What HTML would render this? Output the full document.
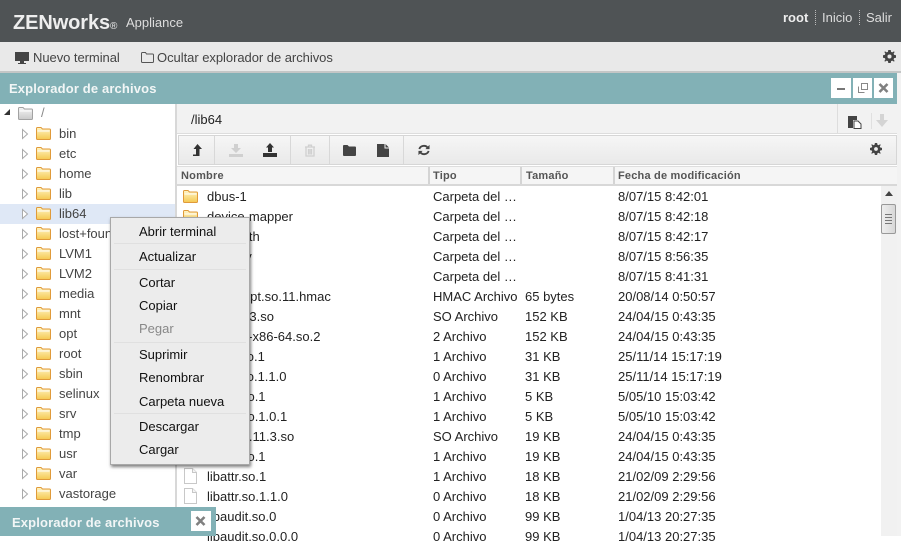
<!DOCTYPE html>
<html><head><meta charset="utf-8"><style>
*{box-sizing:border-box}
html,body{margin:0;padding:0;width:901px;height:536px;overflow:hidden;background:#fff;font-family:"Liberation Sans",Arial,sans-serif;font-size:13px;color:#222}
.a{position:absolute}
.t{position:absolute;white-space:nowrap;line-height:16px}
.tr{position:absolute;left:0;width:175px;height:20px;color:#444}
.tr span{position:absolute;left:59px;top:2px;line-height:16px}
.tr svg{position:absolute}
.fr{position:absolute;left:177px;width:704px;height:20px;color:#222}
.fr span{position:absolute;top:3px;line-height:16px;white-space:nowrap}
.fr svg{position:absolute;left:6px;top:4px}
.n{left:30px}.k{left:256px}.s{left:348px}.d{left:441px}
.m{position:absolute;left:28px;line-height:16px;color:#111}
.sep{position:absolute;left:3px;right:3px;height:1px;background:#e0e0e0}
.th{position:absolute;top:167px;height:20px;line-height:18px;font-weight:bold;font-size:11px;color:#555;letter-spacing:.2px}
.wb{position:absolute;top:78px;height:20px;background:#fff}
.vs{position:absolute;top:136px;width:1px;height:28px;background:#d8d8d8}
</style></head><body>
<svg width="0" height="0" style="position:absolute"><defs>
<linearGradient id="fg" x1="0" y1="0" x2="0" y2="1"><stop offset="0" stop-color="#fff6c8"/><stop offset="1" stop-color="#f5c850"/></linearGradient>
<symbol id="fo" viewBox="0 0 15 13"><path d="M.5 2.500V1.500Q.5.5 1.500.5H5L6.500 2H13.500Q14.500 2 14.500 3V11.500Q14.500 12.500 13.500 12.500H1.500Q.5 12.500 .5 11.500Z" fill="url(#fg)" stroke="#e09a3a"/><path d="M1.500 4H13.500" stroke="#fff"/></symbol>
<symbol id="fi" viewBox="0 0 15 16"><path d="M1.500.5H9.500L13.500 4.500V15.500H1.500Z" fill="#fff" stroke="#c8c8c8"/><path d="M9.500.5V4.500H13.500" fill="#f4f4f4" stroke="#c8c8c8"/></symbol>
<symbol id="ar" viewBox="0 0 8 12"><path d="M1.500 1.500L6.500 6L1.500 10.500Z" fill="#fff" stroke="#aaa"/></symbol>
<symbol id="ge" viewBox="0 0 14 14"><path fill="#444" fill-rule="evenodd" d="M5.700 0H8.300L8.700 2L10 2.600L11.800 1.500L12.500 2.200L11.400 4L12 5.300L14 5.700V8.300L12 8.700L11.400 10L12.500 11.800L11.800 12.500L10 11.400L8.700 12L8.300 14H5.700L5.300 12L4 11.400L2.200 12.500L1.500 11.800L2.600 10L2 8.700L0 8.300V5.700L2 5.300L2.600 4L1.500 2.200L2.200 1.500L4 2.600L5.300 2ZM7 4.800A2.200 2.200 0 1 0 7 9.200A2.200 2.200 0 1 0 7 4.800Z"/></symbol>
</defs></svg>

<!-- header -->
<div class="a" style="left:0;top:0;width:901px;height:42px;background:#4f5355"></div>
<div class="t" style="left:13px;top:11px;font-size:20px;line-height:24px;font-weight:bold;color:#eee;letter-spacing:-.1px">ZENworks<span style="font-size:10px;font-weight:normal;letter-spacing:0">®</span></div>
<div class="t" style="left:126px;top:15px;font-size:13px;color:#ddd">Appliance</div>
<div class="t" style="left:783px;top:10px;font-size:13px;font-weight:bold;color:#eee">root</div>
<div class="a" style="left:815px;top:10px;height:15px;border-left:1px dotted #bbb"></div>
<div class="t" style="left:822px;top:10px;font-size:13px;color:#ddd">Inicio</div>
<div class="a" style="left:859px;top:10px;height:15px;border-left:1px dotted #bbb"></div>
<div class="t" style="left:866px;top:10px;font-size:13px;color:#ddd">Salir</div>

<!-- toolbar -->
<div class="a" style="left:0;top:42px;width:901px;height:31px;background:#e9e9e9;border-bottom:2px solid #c4c6c6"></div>
<svg class="a" style="left:15px;top:52px" width="14" height="13" viewBox="0 0 14 13"><path fill="#444" fill-rule="evenodd" d="M0 0H14V9H9V11H11V12H3V11H5V9H0Z"/></svg>
<div class="t" style="left:33px;top:50px;font-size:13px;color:#444;letter-spacing:-.05px">Nuevo terminal</div>
<svg class="a" style="left:141px;top:52px" width="13" height="11" viewBox="0 0 13 11"><path fill="none" stroke="#555" d="M.5 1.500Q.5.5 1.500.5H4.500L5.500 2H11.500Q12.500 2 12.500 3V9.500Q12.500 10.500 11.500 10.500H1.500Q.5 10.500 .5 9.500Z"/></svg>
<div class="t" style="left:157px;top:50px;font-size:13px;color:#444;letter-spacing:-.04px">Ocultar explorador de archivos</div>
<svg class="a" style="left:883px;top:50px" width="13" height="13"><use href="#ge"/></svg>

<!-- right strip -->
<div class="a" style="left:897px;top:73px;width:4px;height:463px;background:#f2f2f2"></div>

<!-- teal title -->
<div class="a" style="left:0;top:73px;width:897px;height:31px;background:#82b1b6"></div>
<div class="t" style="left:9px;top:81px;font-size:13px;font-weight:bold;color:#f2f6f6;letter-spacing:.14px">Explorador de archivos</div>
<div class="wb" style="left:831px;width:20px"><div class="a" style="left:6px;top:10px;width:8px;height:2px;background:#777"></div></div>
<div class="wb" style="left:853px;width:19px"><svg class="a" style="left:5px;top:5px" width="10" height="10"><path d="M3.500.5H9.500V6.500H3.500ZM.5 3.500V9.500H6.500" fill="none" stroke="#888"/></svg></div>
<div class="wb" style="left:874px;width:19px"><svg class="a" style="left:4px;top:5px" width="11" height="10"><path d="M1.500 1L9.500 9M9.500 1L1.500 9" stroke="#808080" stroke-width="2.600"/></svg></div>

<!-- tree -->
<div class="a" style="left:175px;top:104px;width:2px;height:432px;background:#d8d8d8"></div>
<svg class="a" style="left:3px;top:108px" width="8" height="8"><path d="M7 1V7H1Z" fill="#333"/></svg>
<svg class="a" style="left:18px;top:107px" width="15" height="13"><use href="#fo" style="filter:grayscale(1)"/></svg>
<div class="t" style="left:41px;top:105px;color:#888">/</div>
<div class="a" style="left:0;top:204px;width:175px;height:20px;background:#dfe8f6"></div>

<div class="tr" style="top:124px"><svg style="left:21px;top:4px" width="8" height="12"><use href="#ar"/></svg><svg style="left:36px;top:3px" width="15" height="13"><use href="#fo"/></svg><span>bin</span></div>
<div class="tr" style="top:144px"><svg style="left:21px;top:4px" width="8" height="12"><use href="#ar"/></svg><svg style="left:36px;top:3px" width="15" height="13"><use href="#fo"/></svg><span>etc</span></div>
<div class="tr" style="top:164px"><svg style="left:21px;top:4px" width="8" height="12"><use href="#ar"/></svg><svg style="left:36px;top:3px" width="15" height="13"><use href="#fo"/></svg><span>home</span></div>
<div class="tr" style="top:184px"><svg style="left:21px;top:4px" width="8" height="12"><use href="#ar"/></svg><svg style="left:36px;top:3px" width="15" height="13"><use href="#fo"/></svg><span>lib</span></div>
<div class="tr" style="top:204px"><svg style="left:21px;top:4px" width="8" height="12"><use href="#ar"/></svg><svg style="left:36px;top:3px" width="15" height="13"><use href="#fo"/></svg><span>lib64</span></div>
<div class="tr" style="top:224px"><svg style="left:21px;top:4px" width="8" height="12"><use href="#ar"/></svg><svg style="left:36px;top:3px" width="15" height="13"><use href="#fo"/></svg><span>lost+found</span></div>
<div class="tr" style="top:244px"><svg style="left:21px;top:4px" width="8" height="12"><use href="#ar"/></svg><svg style="left:36px;top:3px" width="15" height="13"><use href="#fo"/></svg><span>LVM1</span></div>
<div class="tr" style="top:264px"><svg style="left:21px;top:4px" width="8" height="12"><use href="#ar"/></svg><svg style="left:36px;top:3px" width="15" height="13"><use href="#fo"/></svg><span>LVM2</span></div>
<div class="tr" style="top:284px"><svg style="left:21px;top:4px" width="8" height="12"><use href="#ar"/></svg><svg style="left:36px;top:3px" width="15" height="13"><use href="#fo"/></svg><span>media</span></div>
<div class="tr" style="top:304px"><svg style="left:21px;top:4px" width="8" height="12"><use href="#ar"/></svg><svg style="left:36px;top:3px" width="15" height="13"><use href="#fo"/></svg><span>mnt</span></div>
<div class="tr" style="top:324px"><svg style="left:21px;top:4px" width="8" height="12"><use href="#ar"/></svg><svg style="left:36px;top:3px" width="15" height="13"><use href="#fo"/></svg><span>opt</span></div>
<div class="tr" style="top:344px"><svg style="left:21px;top:4px" width="8" height="12"><use href="#ar"/></svg><svg style="left:36px;top:3px" width="15" height="13"><use href="#fo"/></svg><span>root</span></div>
<div class="tr" style="top:364px"><svg style="left:21px;top:4px" width="8" height="12"><use href="#ar"/></svg><svg style="left:36px;top:3px" width="15" height="13"><use href="#fo"/></svg><span>sbin</span></div>
<div class="tr" style="top:384px"><svg style="left:21px;top:4px" width="8" height="12"><use href="#ar"/></svg><svg style="left:36px;top:3px" width="15" height="13"><use href="#fo"/></svg><span>selinux</span></div>
<div class="tr" style="top:404px"><svg style="left:21px;top:4px" width="8" height="12"><use href="#ar"/></svg><svg style="left:36px;top:3px" width="15" height="13"><use href="#fo"/></svg><span>srv</span></div>
<div class="tr" style="top:424px"><svg style="left:21px;top:4px" width="8" height="12"><use href="#ar"/></svg><svg style="left:36px;top:3px" width="15" height="13"><use href="#fo"/></svg><span>tmp</span></div>
<div class="tr" style="top:444px"><svg style="left:21px;top:4px" width="8" height="12"><use href="#ar"/></svg><svg style="left:36px;top:3px" width="15" height="13"><use href="#fo"/></svg><span>usr</span></div>
<div class="tr" style="top:464px"><svg style="left:21px;top:4px" width="8" height="12"><use href="#ar"/></svg><svg style="left:36px;top:3px" width="15" height="13"><use href="#fo"/></svg><span>var</span></div>
<div class="tr" style="top:484px"><svg style="left:21px;top:4px" width="8" height="12"><use href="#ar"/></svg><svg style="left:36px;top:3px" width="15" height="13"><use href="#fo"/></svg><span>vastorage</span></div>

<!-- path bar -->
<div class="a" style="left:177px;top:104px;width:720px;height:30px;background:#f2f2f2;border-bottom:1px solid #ddd"></div>
<div class="t" style="left:191px;top:112px;color:#222">/lib64</div>
<div class="a" style="left:837px;top:104px;width:1px;height:30px;background:#ddd"></div>
<div class="a" style="left:871px;top:113px;width:1px;height:16px;background:#e0e0e0"></div>
<svg class="a" style="left:847px;top:115px" width="15" height="14" viewBox="0 0 15 14"><path fill="#444" d="M1 1H10V5H6V13H1Z"/><path fill="#fff" stroke="#444" d="M7 6H11L14 9V13.500H7Z"/></svg>
<svg class="a" style="left:875px;top:114px" width="14" height="13" viewBox="0 0 14 13"><path fill="#d4d4d4" d="M5 0H9V6H13L7 13L1 6H5Z"/></svg>

<!-- action toolbar -->
<div class="a" style="left:178px;top:135px;width:719px;height:30px;background:linear-gradient(#f6f6f6,#e9e9e9);border:1px solid #d6d6d6"></div>
<div class="vs" style="left:214px"></div>
<div class="vs" style="left:290px"></div>
<div class="vs" style="left:329px"></div>
<div class="vs" style="left:403px"></div>
<svg class="a" style="left:192px;top:144px" width="11" height="13" viewBox="0 0 11 13"><path fill="#333" d="M5.500 0L10 5H7.500V12H1V10.500H4V5H1.500Z"/></svg>
<svg class="a" style="left:229px;top:144px" width="14" height="13" viewBox="0 0 14 13"><path fill="#d0d0d0" d="M5 0H9V4H12L7 9L2 4H5ZM0 10H14V13H0Z"/></svg>
<svg class="a" style="left:263px;top:143px" width="14" height="14" viewBox="0 0 14 14"><path fill="#333" d="M7 0L11 4.500H9V9H5V4.500H3ZM0 10H14V14H0Z"/></svg>
<svg class="a" style="left:304px;top:144px" width="12" height="13" viewBox="0 0 12 13"><path fill="none" stroke="#d0d0d0" stroke-width="1.300" d="M1 3H11M2 3V12H10V3M4.500 3V1.200H7.500V3M4.500 5V10.500M6 5V10.500M7.500 5V10.500"/></svg>
<svg class="a" style="left:343px;top:145px" width="13" height="11" viewBox="0 0 13 11"><path fill="#444" d="M0 1Q0 0 1 0H4.500L6 1.500H12Q13 1.500 13 2.500V10Q13 11 12 11H1Q0 11 0 10Z"/></svg>
<svg class="a" style="left:377px;top:144px" width="12" height="13" viewBox="0 0 12 13"><path fill="#444" d="M0 0H7.500V4.500H12V13H0ZM8.500 0L12 3.500H8.500Z"/></svg>
<svg class="a" style="left:418px;top:144px" width="12" height="12" viewBox="0 0 13 13"><path fill="none" stroke="#444" stroke-width="2" d="M1.500 5.500A5 4.500 0 0 1 10.500 4M11.500 7.500A5 4.500 0 0 1 2.500 9"/><path fill="#444" d="M12.500 1V5.500H8ZM.5 12V7.500H5Z"/></svg>
<svg class="a" style="left:870px;top:143px" width="12" height="12"><use href="#ge"/></svg>

<!-- table header -->
<div class="a" style="left:177px;top:166px;width:720px;height:20px;background:#f5f5f5;border-top:1px solid #ddd;border-bottom:2px solid #d8d8d8"></div>
<div class="a" style="left:428px;top:167px;width:2px;height:17px;background:#d4d4d4"></div>
<div class="a" style="left:520px;top:167px;width:2px;height:17px;background:#d4d4d4"></div>
<div class="a" style="left:613px;top:167px;width:2px;height:17px;background:#d4d4d4"></div>
<div class="th" style="left:181px">Nombre</div>
<div class="th" style="left:433px">Tipo</div>
<div class="th" style="left:526px">Tamaño</div>
<div class="th" style="left:618px">Fecha de modificación</div>

<!-- rows -->
<div class="fr" style="top:186px"><svg width="15" height="13"><use href="#fo"/></svg><span class="n">dbus-1</span><span class="k">Carpeta del …</span><span class="d">8/07/15 8:42:01</span></div>
<div class="fr" style="top:206px"><svg width="15" height="13"><use href="#fo"/></svg><span class="n">device-mapper</span><span class="k">Carpeta del …</span><span class="d">8/07/15 8:42:18</span></div>
<div class="fr" style="top:226px"><span class="n">multipath</span><span class="k">Carpeta del …</span><span class="d">8/07/15 8:42:17</span></div>
<div class="fr" style="top:246px"><span class="n">security</span><span class="k">Carpeta del …</span><span class="d">8/07/15 8:56:35</span></div>
<div class="fr" style="top:266px"><span class="n">xtables</span><span class="k">Carpeta del …</span><span class="d">8/07/15 8:41:31</span></div>
<div class="fr" style="top:286px"><span class="n" style="left:32px">.libgcrypt.so.11.hmac</span><span class="k">HMAC Archivo</span><span class="s">65 bytes</span><span class="d">20/08/14 0:50:57</span></div>
<div class="fr" style="top:306px"><span class="n">ld-2.11.3.so</span><span class="k">SO Archivo</span><span class="s">152 KB</span><span class="d">24/04/15 0:43:35</span></div>
<div class="fr" style="top:326px"><span class="n">ld-linux-x86-64.so.2</span><span class="k">2 Archivo</span><span class="s">152 KB</span><span class="d">24/04/15 0:43:35</span></div>
<div class="fr" style="top:346px"><span class="n">libacl.so.1</span><span class="k">1 Archivo</span><span class="s">31 KB</span><span class="d">25/11/14 15:17:19</span></div>
<div class="fr" style="top:366px"><span class="n">libacl.so.1.1.0</span><span class="k">0 Archivo</span><span class="s">31 KB</span><span class="d">25/11/14 15:17:19</span></div>
<div class="fr" style="top:386px"><span class="n">libaio.so.1</span><span class="k">1 Archivo</span><span class="s">5 KB</span><span class="d">5/05/10 15:03:42</span></div>
<div class="fr" style="top:406px"><span class="n">libaio.so.1.0.1</span><span class="k">1 Archivo</span><span class="s">5 KB</span><span class="d">5/05/10 15:03:42</span></div>
<div class="fr" style="top:426px"><span class="n">libanl-2.11.3.so</span><span class="k">SO Archivo</span><span class="s">19 KB</span><span class="d">24/04/15 0:43:35</span></div>
<div class="fr" style="top:446px"><span class="n">libanl.so.1</span><span class="k">1 Archivo</span><span class="s">19 KB</span><span class="d">24/04/15 0:43:35</span></div>
<div class="fr" style="top:466px"><svg width="15" height="16" style="top:2px"><use href="#fi"/></svg><span class="n">libattr.so.1</span><span class="k">1 Archivo</span><span class="s">18 KB</span><span class="d">21/02/09 2:29:56</span></div>
<div class="fr" style="top:486px"><svg width="15" height="16" style="top:2px"><use href="#fi"/></svg><span class="n">libattr.so.1.1.0</span><span class="k">0 Archivo</span><span class="s">18 KB</span><span class="d">21/02/09 2:29:56</span></div>
<div class="fr" style="top:506px"><span class="n">libaudit.so.0</span><span class="k">0 Archivo</span><span class="s">99 KB</span><span class="d">1/04/13 20:27:35</span></div>
<div class="fr" style="top:526px"><span class="n">libaudit.so.0.0.0</span><span class="k">0 Archivo</span><span class="s">99 KB</span><span class="d">1/04/13 20:27:35</span></div>

<!-- scrollbar -->
<div class="a" style="left:881px;top:186px;width:16px;height:350px;background:#f1f1f1"></div>
<svg class="a" style="left:885px;top:191px" width="8" height="5"><path d="M4 0L8 5H0Z" fill="#444"/></svg>
<div class="a" style="left:881px;top:204px;width:15px;height:30px;background:linear-gradient(90deg,#eee,#d8d8d8);border:1px solid #999;border-radius:2px"></div>
<div class="a" style="left:885px;top:214px;width:7px;height:1px;background:#777;box-shadow:0 3px 0 #777,0 6px 0 #777,0 9px 0 #777"></div>

<!-- context menu -->
<div class="a" style="left:110px;top:217px;width:140px;height:248px;background:#ececec;border:1px solid #a8a8a8;box-shadow:1px 2px 3px rgba(0,0,0,.5)">
<div class="m" style="top:6px">Abrir terminal</div>
<div class="sep" style="top:25px"></div>
<div class="m" style="top:31px">Actualizar</div>
<div class="sep" style="top:51px"></div>
<div class="m" style="top:57px">Cortar</div>
<div class="m" style="top:80px">Copiar</div>
<div class="m" style="top:103px;color:#888">Pegar</div>
<div class="sep" style="top:124px"></div>
<div class="m" style="top:129px">Suprimir</div>
<div class="m" style="top:152px">Renombrar</div>
<div class="m" style="top:176px">Carpeta nueva</div>
<div class="sep" style="top:195px"></div>
<div class="m" style="top:201px">Descargar</div>
<div class="m" style="top:224px">Cargar</div>
</div>

<!-- bottom panel -->
<div class="a" style="left:0;top:507px;width:216px;height:29px;background:#82b1b6"></div>
<div class="t" style="left:12px;top:515px;font-size:13px;font-weight:bold;color:#f2f6f6;letter-spacing:.14px">Explorador de archivos</div>
<div class="a" style="left:191px;top:511px;width:20px;height:20px;background:#fff"><svg class="a" style="left:4px;top:5px" width="11" height="10"><path d="M1.500 1L9.500 9M9.500 1L1.500 9" stroke="#808080" stroke-width="2.600"/></svg></div>
</body></html>
